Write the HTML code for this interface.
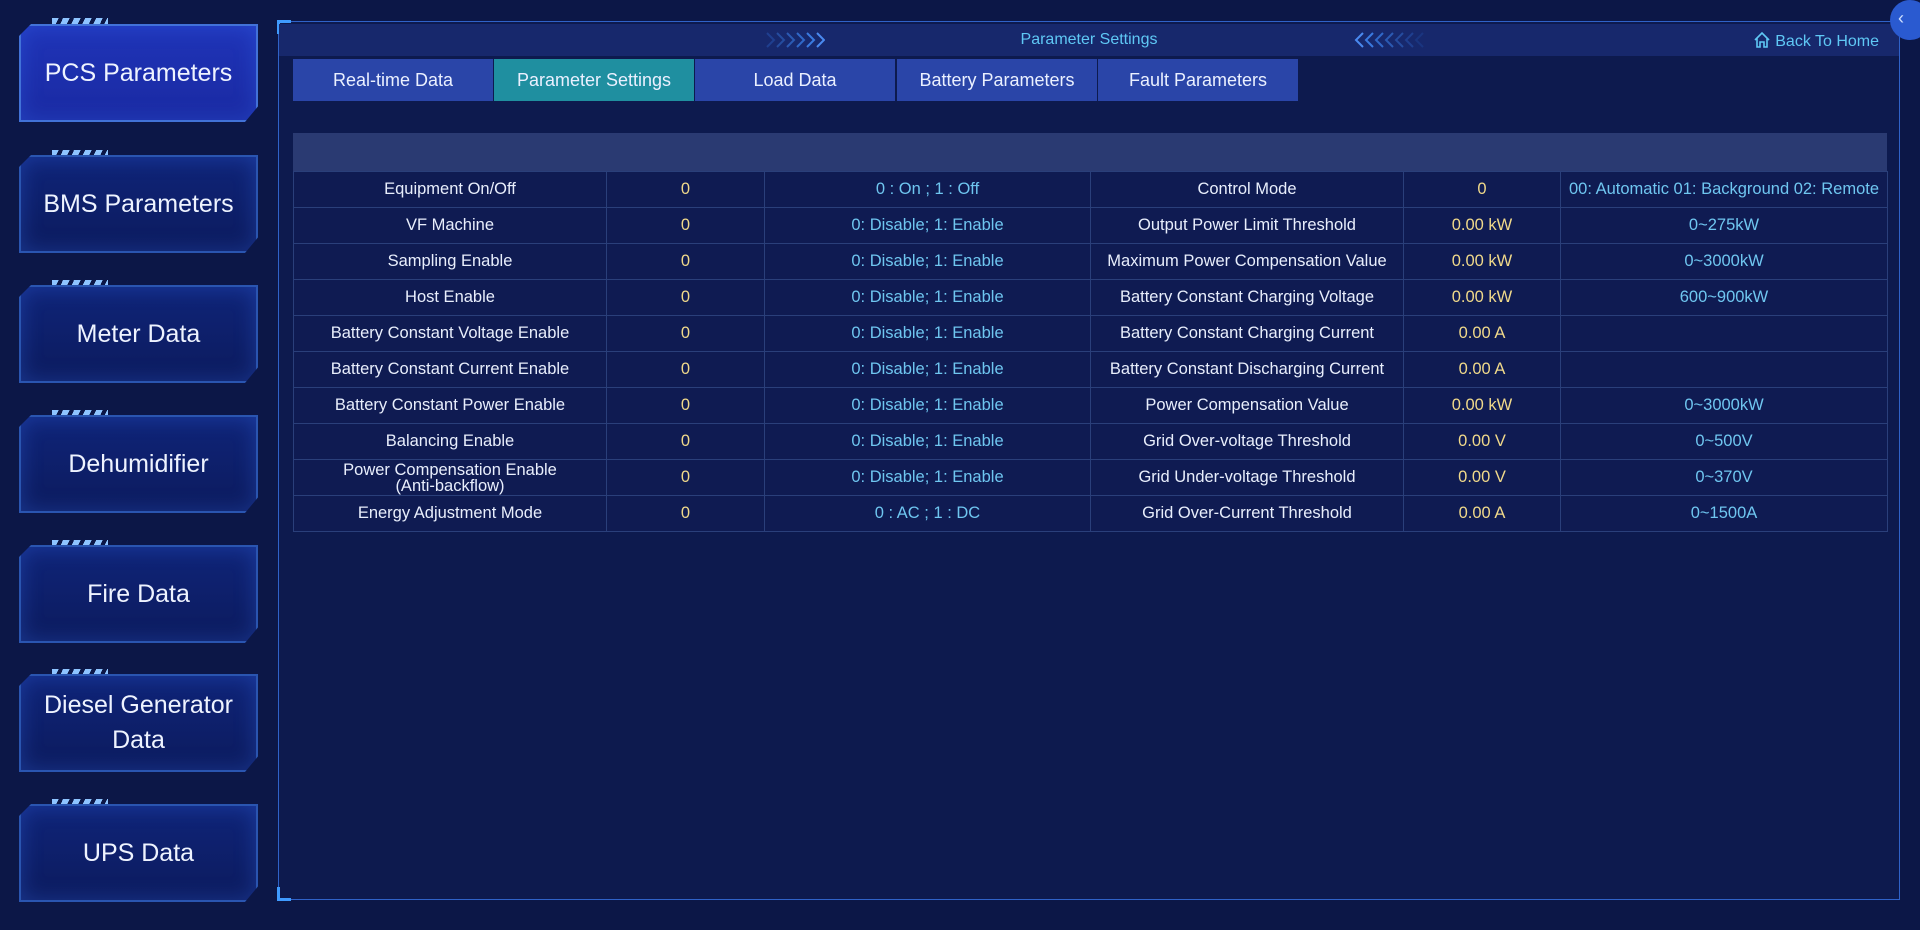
<!DOCTYPE html>
<html><head><meta charset="utf-8"><style>
*{margin:0;padding:0;box-sizing:border-box}
body{width:1920px;height:930px;background:#0c1747;font-family:"Liberation Sans",sans-serif;position:relative;overflow:hidden;color:#e8eefc}
.btn{position:absolute;left:19px;width:239px;height:98px;border:2px solid #2a55b0;background:linear-gradient(180deg,#0f2478,#0c1b5e);box-shadow:inset 0 0 22px rgba(60,120,255,.3);clip-path:polygon(12px 0,100% 0,100% 84%,226px 100%,0 100%,0 12px);display:flex;align-items:center;justify-content:center;text-align:center;font-size:25px;line-height:35px;color:#eef3ff}
.btn.act{background:linear-gradient(180deg,#1f34b8,#1a2aa2);border-color:#4272d8}
.stripe{position:absolute;left:52px;width:56px;height:7px;background:repeating-linear-gradient(115deg,#8ec4ff 0 6px,transparent 6px 10px)}
.panel{position:absolute;left:278px;top:21px;width:1622px;height:879px;border:1px solid #2f62c8;background:#0d1a4e}
.hdr{position:absolute;left:0;top:2px;width:1620px;height:32px;background:#17286c}
.title{position:absolute;left:0;width:100%;top:7px;text-align:center;color:#5fc8f5;font-size:16px}
.home{position:absolute;right:20px;top:7px;color:#5fc8f5;font-size:16px}
.tab{position:absolute;top:37px;height:42px;width:200px;background:#2a45a8;color:#eaf0ff;font-size:18px;text-align:center;line-height:42px}
.tab.act{background:#1f8fa0}
.gray{position:absolute;left:14px;top:111px;width:1594px;height:38px;background:#2a3a72}
table{position:absolute;left:14px;top:149px;border-collapse:collapse;width:1594px;table-layout:fixed}
td{height:36px;border:1.5px solid #2a3f7a;text-align:center;font-size:16.5px;color:#e8eefc;background:#0f1b52;white-space:nowrap;overflow:hidden}
td.v{color:#f0d98a}
td.d{color:#6fc6f0}
td.s{white-space:normal;line-height:16px}
.corner{position:absolute;width:14px;height:14px;border-color:#3f9bff;border-style:solid}
</style></head><body>
<div class="stripe" style="top:18px"></div><div class="btn act" style="top:24px">PCS Parameters</div>
<div class="stripe" style="top:150px"></div><div class="btn" style="top:155px">BMS Parameters</div>
<div class="stripe" style="top:280px"></div><div class="btn" style="top:285px">Meter Data</div>
<div class="stripe" style="top:410px"></div><div class="btn" style="top:415px">Dehumidifier</div>
<div class="stripe" style="top:540px"></div><div class="btn" style="top:545px">Fire Data</div>
<div class="stripe" style="top:669px"></div><div class="btn" style="top:674px">Diesel Generator<br>Data</div>
<div class="stripe" style="top:799px"></div><div class="btn" style="top:804px">UPS Data</div>

<div class="panel">
<div class="corner" style="left:-2px;top:-2px;border-width:3px 0 0 3px"></div>
<div class="corner" style="left:-2px;bottom:-2px;border-width:0 0 3px 3px"></div>
<div class="hdr">
 <svg style="position:absolute;left:486px;top:7px" width="60" height="18" viewBox="0 0 60 18">
  <g fill="none" stroke-width="2"><path d="M2 2l7 7-7 7" stroke="#1f3f90"/><path d="M12 2l7 7-7 7" stroke="#254c9f"/><path d="M22 2l7 7-7 7" stroke="#2b5ab3"/><path d="M32 2l7 7-7 7" stroke="#3068c8"/><path d="M42 2l7 7-7 7" stroke="#3a7ae0"/><path d="M52 2l7 7-7 7" stroke="#4a8af0"/></g></svg>
 <div class="title">Parameter Settings</div>
 <svg style="position:absolute;left:1075px;top:7px" width="72" height="18" viewBox="0 0 72 18">
  <g fill="none" stroke-width="2"><path d="M9 2l-7 7 7 7" stroke="#4a8af0"/><path d="M19 2l-7 7 7 7" stroke="#3a7ae0"/><path d="M29 2l-7 7 7 7" stroke="#3068c8"/><path d="M39 2l-7 7 7 7" stroke="#2b5ab3"/><path d="M49 2l-7 7 7 7" stroke="#254c9f"/><path d="M59 2l-7 7 7 7" stroke="#1f3f90"/><path d="M69 2l-7 7 7 7" stroke="#1a3580"/></g></svg>
 <div class="home"><svg width="18" height="18" viewBox="0 0 18 18" style="vertical-align:-3px;margin-right:4px"><path d="M2 9 L9 2 L16 9 M4 7 V16 H7 V11 H11 V16 H14 V7" fill="none" stroke="#5fc8f5" stroke-width="1.6"/></svg>Back To Home</div>
</div>
<div class="tab" style="left:14px">Real-time Data</div>
<div class="tab act" style="left:215px">Parameter Settings</div>
<div class="tab" style="left:416px">Load Data</div>
<div class="tab" style="left:618px">Battery Parameters</div>
<div class="tab" style="left:819px">Fault Parameters</div>
<div class="gray"></div>
<table>
<colgroup><col style="width:313px"><col style="width:158px"><col style="width:326px"><col style="width:313px"><col style="width:157px"><col style="width:327px"></colgroup>
<tr><td>Equipment On/Off</td><td class="v">0</td><td class="d">0 : On ; 1 : Off</td><td>Control Mode</td><td class="v">0</td><td class="d">00: Automatic 01: Background 02: Remote</td></tr>
<tr><td>VF Machine</td><td class="v">0</td><td class="d">0: Disable; 1: Enable</td><td>Output Power Limit Threshold</td><td class="v">0.00 kW</td><td class="d">0~275kW</td></tr>
<tr><td>Sampling Enable</td><td class="v">0</td><td class="d">0: Disable; 1: Enable</td><td>Maximum Power Compensation Value</td><td class="v">0.00 kW</td><td class="d">0~3000kW</td></tr>
<tr><td>Host Enable</td><td class="v">0</td><td class="d">0: Disable; 1: Enable</td><td>Battery Constant Charging Voltage</td><td class="v">0.00 kW</td><td class="d">600~900kW</td></tr>
<tr><td>Battery Constant Voltage Enable</td><td class="v">0</td><td class="d">0: Disable; 1: Enable</td><td>Battery Constant Charging Current</td><td class="v">0.00 A</td><td class="d"></td></tr>
<tr><td>Battery Constant Current Enable</td><td class="v">0</td><td class="d">0: Disable; 1: Enable</td><td>Battery Constant Discharging Current</td><td class="v">0.00 A</td><td class="d"></td></tr>
<tr><td>Battery Constant Power Enable</td><td class="v">0</td><td class="d">0: Disable; 1: Enable</td><td>Power Compensation Value</td><td class="v">0.00 kW</td><td class="d">0~3000kW</td></tr>
<tr><td>Balancing Enable</td><td class="v">0</td><td class="d">0: Disable; 1: Enable</td><td>Grid Over-voltage Threshold</td><td class="v">0.00 V</td><td class="d">0~500V</td></tr>
<tr><td class="s">Power Compensation Enable<br>(Anti-backflow)</td><td class="v">0</td><td class="d">0: Disable; 1: Enable</td><td>Grid Under-voltage Threshold</td><td class="v">0.00 V</td><td class="d">0~370V</td></tr>
<tr><td>Energy Adjustment Mode</td><td class="v">0</td><td class="d">0 : AC ; 1 : DC</td><td>Grid Over-Current Threshold</td><td class="v">0.00 A</td><td class="d">0~1500A</td></tr>
</table>
</div>
<div style="position:absolute;left:1890px;top:0;width:40px;height:40px;border-radius:50%;background:#2a5ad0;color:#cfe0ff;font-size:18px;line-height:36px;padding-left:8px">‹</div>
</body></html>
